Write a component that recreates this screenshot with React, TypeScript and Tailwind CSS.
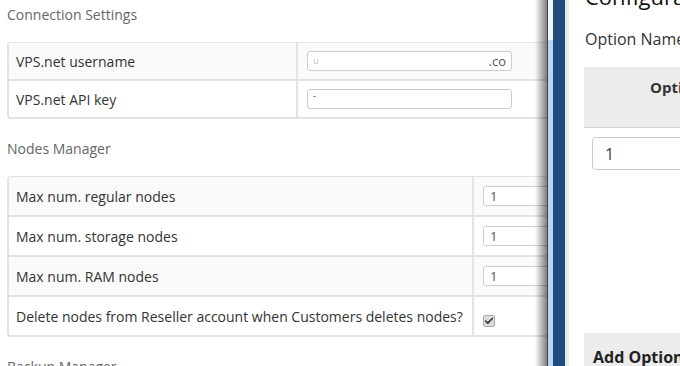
import { Check } from 'lucide-react';

const font = { fontFamily: '"Open Sans", "Liberation Sans", sans-serif' };

function SectionTitle({ children, className = '' }: { children: React.ReactNode; className?: string }) {
  return <div className={`text-[14px] leading-[20px] text-[#666] ${className}`}>{children}</div>;
}

function NumInput() {
  return (
    <div className="h-[20px] w-[120px] rounded-[3px] border border-[#ccc] bg-white pl-[6px] text-[13px] leading-[18px] text-[#555]">1</div>
  );
}

function Row({ label, striped, last, colWidth, tall, children }: { label: string; striped?: boolean; last?: boolean; colWidth: string; tall?: boolean; children: React.ReactNode }) {
  return (
    <div className={`box-content flex ${tall ? 'h-[38px]' : 'h-[36px]'} ${striped ? 'bg-[#fafafa]' : 'bg-white'} ${last ? '' : 'border-b-2 border-[#e3e3e3]'}`}>
      <div className={`${colWidth} flex shrink-0 items-center border-r-2 border-[#e3e3e3] pl-[7px] text-[14px] text-[#333]`}>{label}</div>
      <div className="flex flex-1 items-center pl-[9px]">{children}</div>
    </div>
  );
}

export default function App() {
  return (
    <div className="flex h-[366px] w-[680px] overflow-hidden bg-white" style={font}>
      {/* page behind the modal */}
      <div className="relative w-[547px] shrink-0 overflow-hidden">
        <div className="w-[640px] pl-[7px] pt-[5px]">
          <SectionTitle>Connection Settings</SectionTitle>
          <div className="mt-[17px] overflow-hidden rounded-[4px] border-2 border-t border-[#e3e3e3]">
            <Row label="VPS.net username" striped colWidth="w-[289px]">
              <div className="flex h-[20px] w-[205px] items-center justify-between rounded-[3px] border border-[#ccc] bg-white px-[5px] text-[13px] text-[#555]">
                <span className="text-[9px] text-[#bbb]">u</span>
                <span className="leading-none">.co</span>
              </div>
            </Row>
            <Row label="VPS.net API key" last colWidth="w-[289px]">
              <div className="flex h-[20px] w-[205px] items-center rounded-[3px] border border-[#ccc] bg-white px-[5px]">
                <span className="-mt-[6px] h-px w-[3px] bg-[#999]"></span>
              </div>
            </Row>
          </div>

          <SectionTitle className="mt-[20px]">Nodes Manager</SectionTitle>
          <div className="mt-[17px] overflow-hidden rounded-[4px] border-2 border-t border-[#e3e3e3]">
            <Row label="Max num. regular nodes" striped tall colWidth="w-[465px]">
              <NumInput />
            </Row>
            <Row label="Max num. storage nodes" tall colWidth="w-[465px]">
              <NumInput />
            </Row>
            <Row label="Max num. RAM nodes" striped tall colWidth="w-[465px]">
              <NumInput />
            </Row>
            <Row label="Delete nodes from Reseller account when Customers deletes nodes?" last tall colWidth="w-[465px]">
              <div className="mt-[9px] flex h-[12px] w-[12px] items-center justify-center rounded-[2px] border border-[#aaa] bg-[#dcdcdc]">
                <Check size={10} strokeWidth={4} className="text-[#333]" />
              </div>
            </Row>
          </div>

          <SectionTitle className="mt-[20px]">Backup Manager</SectionTitle>
        </div>
        {/* modal shadow falling on the page */}
        <div className="pointer-events-none absolute inset-y-0 right-0 w-[12px] bg-gradient-to-r from-transparent to-[rgba(0,0,0,0.5)]"></div>
      </div>

      {/* modal frame */}
      <div className="w-px shrink-0 bg-[#444]"></div>
      <div className="flex w-[5px] shrink-0 flex-col">
        <div className="h-[40px] bg-[#eef3f8]"></div>
        <div className="flex-1 bg-[#b7d6f4]"></div>
      </div>
      <div className="w-[12px] shrink-0 bg-[#1c4b7c]"></div>
      <div className="w-[4px] shrink-0 bg-[#deeeee]"></div>

      {/* modal content */}
      <div className="flex min-w-0 flex-1 flex-col overflow-hidden pl-[16px]">
        <div className="-mt-[16px] whitespace-nowrap text-[22px] leading-[24px] text-[#111]">Configuration</div>
        <div className="mt-[19px] whitespace-nowrap text-[16px] leading-[24px] text-[#333]">Option Name</div>
        <div className="mt-[16px] -ml-px w-[200px]">
          <div className="h-[61px] border-b border-[#d6d6d6] bg-[#ececec] pl-[66px] pt-[10px] whitespace-nowrap text-[15px] font-bold leading-[20px] text-[#333]">
            Option Value
          </div>
          <div className="mt-[9px] pl-[8px]">
            <div className="flex h-[33px] w-[160px] items-center rounded-[4px] border border-[#ccc] bg-white pl-[12px] text-[16px] text-[#444]">1</div>
          </div>
          <div className="mt-[163px] h-[40px] bg-[#ececec] pl-[9px] pt-[12px] whitespace-nowrap text-[16px] font-bold leading-[24px] text-[#222]">
            Add Option
          </div>
        </div>
      </div>
    </div>
  );
}
